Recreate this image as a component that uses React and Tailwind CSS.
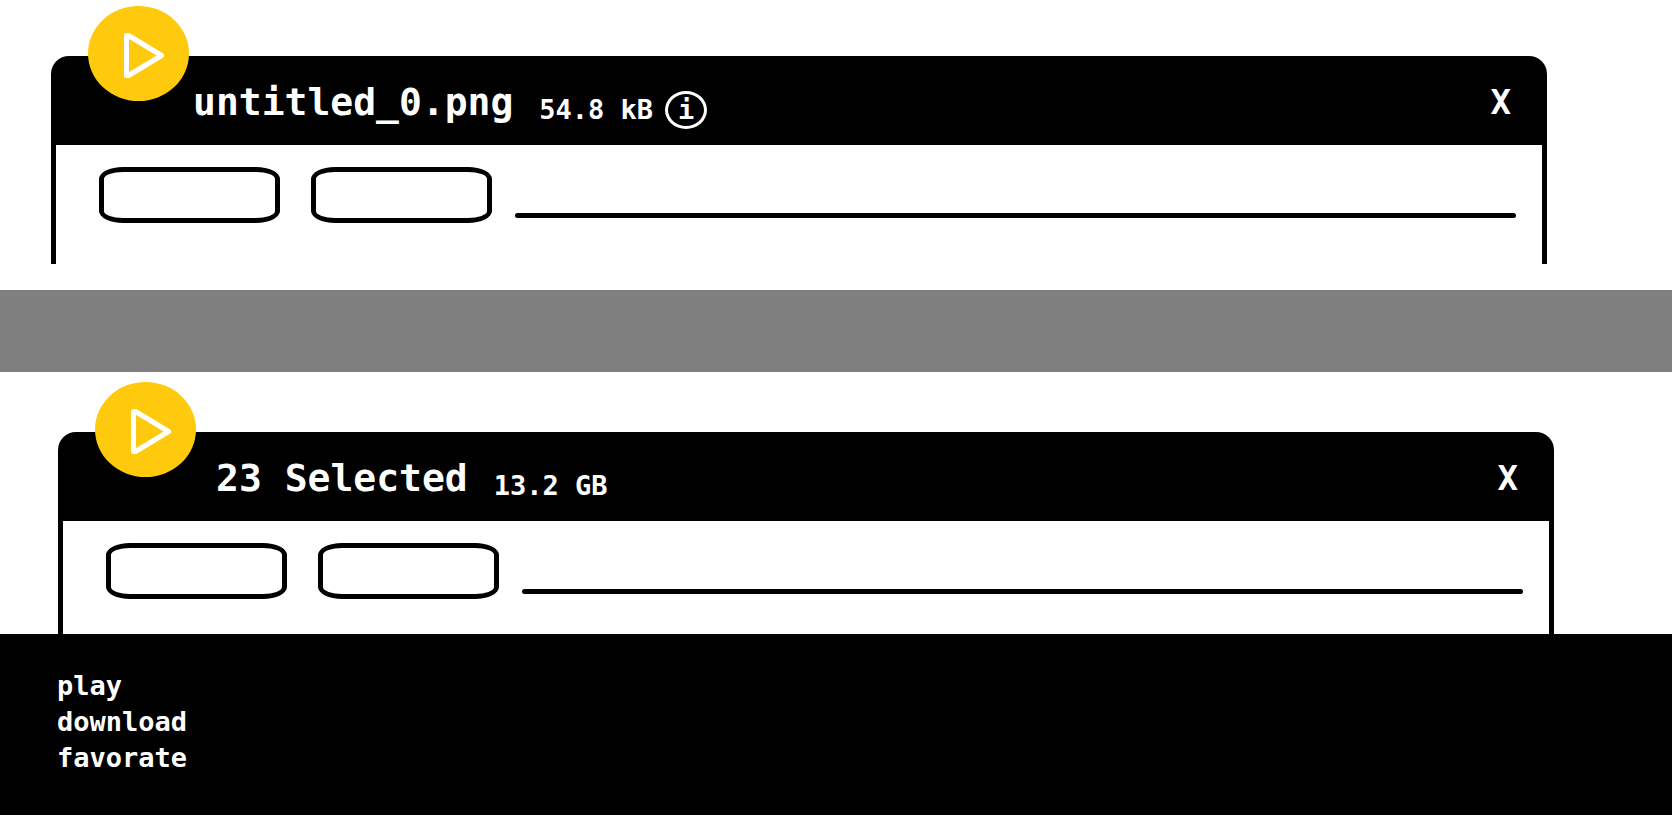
function PlayButton() {
  return (
    <button type="button" aria-label="Play" className="absolute -top-[50px] left-[37px] h-[95px] w-[101px] rounded-[50%] bg-[#ffc90e]">
      <svg viewBox="0 0 101 95" className="h-full w-full" fill="none" stroke="#fff" strokeWidth="5" strokeLinejoin="round" aria-hidden="true">
        <path d="M38.5 29.5V69.5H40.5L73.5 49.5L40.5 29.5Z" />
      </svg>
    </button>
  );
}

function Panel({ title, size, info, className, titleClass }) {
  return (
    <section className={`flex flex-col ${className}`}>
      <header className={`relative flex h-[89px] shrink-0 items-center rounded-t-[18px] bg-black pr-[36px] pt-0.5 text-white ${titleClass}`}>
        <PlayButton />
        <h2 className="text-[38px] leading-[48px]">{title}</h2>
        <span className="ml-[26px] mt-4 text-[27px] leading-8">{size}</span>
        {info && (
          <button type="button" aria-label="File details" className="ml-3 mt-4 h-[38px] w-[42px] rounded-[50%] border-[3px] border-white text-[27px] leading-8">
            i
          </button>
        )}
        <button type="button" aria-label="Close" className="ml-auto text-[34px] leading-10">X</button>
      </header>
      <div className="flex grow items-start border-x-[5px] border-black pl-[43px] pr-[26px] pt-[22px]">
        <button type="button" aria-label="First action" className="h-14 w-[181px] shrink-0 rounded-[24px/12px] border-[5px] border-black" />
        <button type="button" aria-label="Second action" className="ml-[31px] h-14 w-[181px] shrink-0 rounded-[24px/12px] border-[5px] border-black" />
        <div className="ml-[23px] mt-[46px] h-[5px] grow rounded-full bg-black" />
      </div>
    </section>
  );
}

export default function App() {
  return (
    <main className="flex min-h-screen flex-col bg-white font-['DejaVu_Sans_Mono','Liberation_Mono',monospace] font-bold">
      <div className="pb-[26px] pl-[51px] pr-[125px] pt-14">
        <Panel title="untitled_0.png" size="54.8 kB" info className="h-[208px]" titleClass="pl-[142px]" />
      </div>
      <div className="h-[82px] bg-[#7f7f7f]" />
      <div className="pl-[58px] pr-[118px] pt-[60px]">
        <Panel title="23 Selected" size="13.2 GB" className="h-[202px]" titleClass="pl-[158px]" />
      </div>
      <ul className="grow bg-black pl-[57px] pt-[34px] text-[27px] leading-9 text-white">
        <li><button type="button">play</button></li>
        <li><button type="button">download</button></li>
        <li><button type="button">favorate</button></li>
      </ul>
    </main>
  );
}
